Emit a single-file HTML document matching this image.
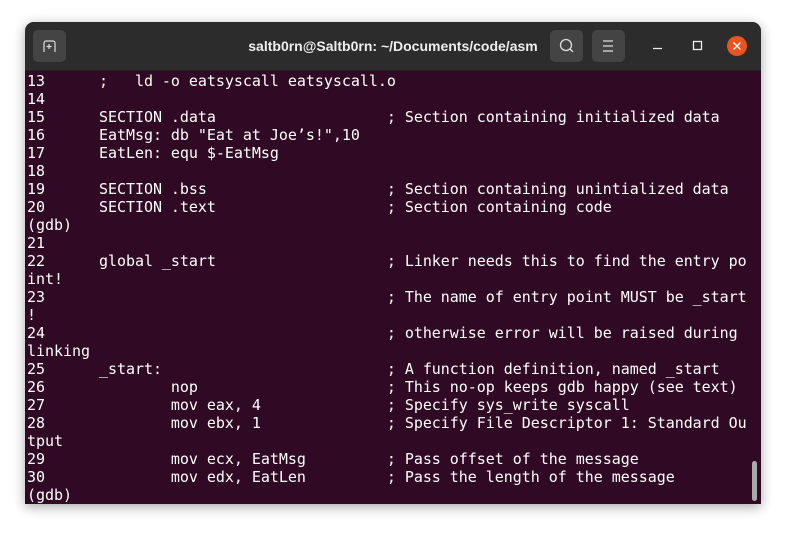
<!DOCTYPE html>
<html><head><meta charset="utf-8"><style>
html,body{margin:0;padding:0;width:786px;height:533px;background:#fff;overflow:hidden}
.win{position:absolute;left:25px;top:22px;width:736px;height:482px;border-radius:9px 9px 0 0;overflow:hidden;box-shadow:0 3px 12px rgba(0,0,0,.35);background:#300a24}
.tb{position:absolute;left:0;top:0;width:736px;height:48px;background:#2c2c2c;border-bottom:1px solid #222}
.btn{position:absolute;top:8px;width:33px;height:32px;background:#444;border-radius:5px}
.title{position:absolute;left:0;right:0;top:16px;text-align:center;color:#eee;font:bold 14px "Liberation Sans",sans-serif}
pre{position:absolute;left:2px;top:50px;margin:0;color:#fff;font:15px/18px "DejaVu Sans Mono","Liberation Mono",monospace;letter-spacing:-0.035px;white-space:pre}
.sb{position:absolute;left:727px;top:439px;width:5px;height:40px;background:#aaa;border-radius:3px}
</style></head><body>
<div class="win">
<div class="tb">
<div class="btn" style="left:8px"><svg width="33" height="32"><path d="M11 22V13a2 2 0 0 1 2-2h7a2 2 0 0 1 2 2v9M13.5 16.5h5M16 14v5" stroke="#ddd" stroke-width="1.2" fill="none"/></svg></div>
<div class="title">saltb0rn@Saltb0rn: ~/Documents/code/asm</div>
<div class="btn" style="left:525px"><svg width="33" height="32"><circle cx="16" cy="15" r="5.5" stroke="#ddd" stroke-width="1.3" fill="none"/><path d="M20 19l3 3" stroke="#ddd" stroke-width="1.3"/></svg></div>
<div class="btn" style="left:567px"><svg width="33" height="32"><path d="M11 11h10M11 16h10M11 21h10" stroke="#ddd" stroke-width="1.2"/></svg></div>
<svg style="position:absolute;left:620px;top:14px" width="116" height="22"><path d="M8 12.5h9" stroke="#eee" stroke-width="1.3"/><rect x="48.5" y="5.5" width="8" height="8" stroke="#eee" stroke-width="1.3" fill="none"/><circle cx="92" cy="10" r="10" fill="#e95420"/><path d="M88.5 6.5l7 7M95.5 6.5l-7 7" stroke="#fff" stroke-width="1.4"/></svg>
</div>
<pre>13      ;   ld -o eatsyscall eatsyscall.o
14
15      SECTION .data                   ; Section containing initialized data
16      EatMsg: db "Eat at Joe’s!",10
17      EatLen: equ $-EatMsg
18
19      SECTION .bss                    ; Section containing unintialized data
20      SECTION .text                   ; Section containing code
(gdb)
21
22      global _start                   ; Linker needs this to find the entry po
int!
23                                      ; The name of entry point MUST be _start
!
24                                      ; otherwise error will be raised during
linking
25      _start:                         ; A function definition, named _start
26              nop                     ; This no-op keeps gdb happy (see text)
27              mov eax, 4              ; Specify sys_write syscall
28              mov ebx, 1              ; Specify File Descriptor 1: Standard Ou
tput
29              mov ecx, EatMsg         ; Pass offset of the message
30              mov edx, EatLen         ; Pass the length of the message
(gdb)</pre>
<div class="sb"></div>
</div>
</body></html>
